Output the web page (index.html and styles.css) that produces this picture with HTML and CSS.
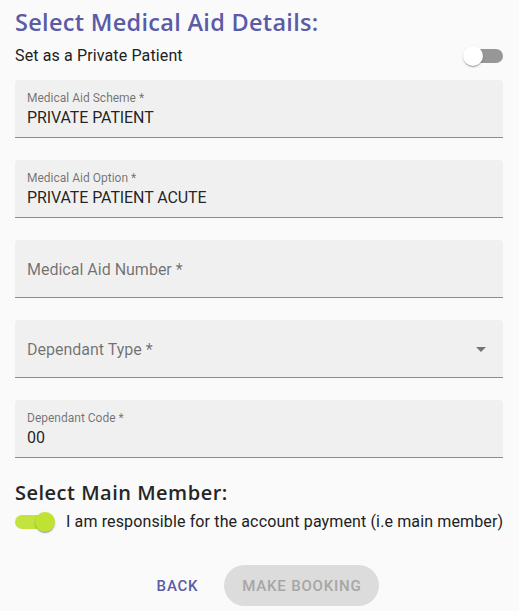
FILE: index.html
```html
<!DOCTYPE html>
<html>
<head>
<meta charset="utf-8">
<link rel="stylesheet" href="styles.css">
</head>
<body>
<div class="page">
  <h1 class="title">Select Medical Aid Details:</h1>
  <div class="row-between">
    <span class="body-text">Set as a Private Patient</span>
    <span class="switch switch-off"><span class="track"></span><span class="thumb"></span></span>
  </div>

  <div class="fields">
    <div class="field filled">
      <span class="label-small">Medical Aid Scheme *</span>
      <span class="value">PRIVATE PATIENT</span>
    </div>
    <div class="field filled">
      <span class="label-small">Medical Aid Option *</span>
      <span class="value">PRIVATE PATIENT ACUTE</span>
    </div>
    <div class="field empty">
      <span class="label-big">Medical Aid Number *</span>
    </div>
    <div class="field empty">
      <span class="label-big">Dependant Type *</span>
      <svg class="arrow" width="24" height="24" viewBox="0 0 24 24"><path d="M7 10l5 5 5-5z" fill="#757575"/></svg>
    </div>
    <div class="field filled">
      <span class="label-small">Dependant Code *</span>
      <span class="value">00</span>
    </div>
  </div>

  <h2 class="subtitle">Select Main Member:</h2>
  <div class="row-check">
    <span class="switch switch-on"><span class="track"></span><span class="thumb"></span></span>
    <span class="body-text nowrap">I am responsible for the account payment (i.e main member)</span>
  </div>

  <div class="actions">
    <button class="btn-text">BACK</button>
    <button class="btn-pill">MAKE BOOKING</button>
  </div>
</div>
</body>
</html>
```

FILE: styles.css
```css
html, body {
  margin: 0;
  padding: 0;
  background: #fafafa;
}
body {
  font-family: Roboto, "Liberation Sans", sans-serif;
  color: rgba(0,0,0,0.87);
}
.page {
  padding: 6px 16px 0 15px;
}
.title {
  margin: 0;
  font-family: "Open Sans", "DejaVu Sans", sans-serif;
  font-weight: 600;
  font-size: 23.5px;
  line-height: 32px;
  color: #5b5ba7;
  letter-spacing: 0.3px;
}
.row-between {
  height: 36px;
  display: flex;
  align-items: center;
  justify-content: space-between;
}
.body-text {
  font-size: 16px;
  line-height: 20px;
  color: #212121;
  letter-spacing: 0.13px;
}
.nowrap {
  white-space: nowrap;
}
.switch {
  position: relative;
  display: inline-block;
  flex: none;
}
.switch-off {
  width: 40px;
  height: 20px;
}
.switch-off .track {
  position: absolute;
  left: 6px;
  top: 3px;
  width: 34px;
  height: 14px;
  border-radius: 7px;
  background: #979797;
}
.switch-off .thumb {
  position: absolute;
  left: 0;
  top: 0;
  width: 20px;
  height: 20px;
  border-radius: 50%;
  background: #fff;
  box-shadow: 0 2px 1px -1px rgba(0,0,0,0.2), 0 1px 1px 0 rgba(0,0,0,0.14), 0 1px 3px 0 rgba(0,0,0,0.12);
}
.switch-on {
  width: 40px;
  height: 20px;
}
.switch-on .track {
  position: absolute;
  left: 0;
  top: 3px;
  width: 34px;
  height: 14px;
  border-radius: 7px;
  background: #c3e33e;
}
.switch-on .thumb {
  position: absolute;
  left: 20px;
  top: 0;
  width: 20px;
  height: 20px;
  border-radius: 50%;
  background: #bfe233;
  box-shadow: 0 2px 1px -1px rgba(0,0,0,0.2), 0 1px 1px 0 rgba(0,0,0,0.14), 0 1px 3px 0 rgba(0,0,0,0.12);
}
.fields {
  margin-top: 6px;
  display: flex;
  flex-direction: column;
  gap: 22px;
}
.field {
  position: relative;
  height: 56px;
  padding-top: 1px;
  background: #f0f0f0;
  border-radius: 4px 4px 0 0;
  border-bottom: 1px solid #8c8c8c;
  box-sizing: content-box;
  padding-left: 12px;
  padding-right: 12px;
  display: flex;
  flex-direction: column;
}
.field.filled {
  padding-top: 11px;
  height: 46px;
}
.label-small {
  font-size: 12px;
  line-height: 14px;
  color: rgba(0,0,0,0.54);
}
.value {
  margin-top: 3px;
  font-size: 16px;
  line-height: 19px;
  color: rgba(0,0,0,0.87);
  letter-spacing: -0.1px;
}
.field.empty {
  justify-content: center;
}
.label-big {
  font-size: 16px;
  line-height: 19px;
  color: rgba(0,0,0,0.54);
}
.arrow {
  position: absolute;
  right: 10px;
  top: 17px;
}
.subtitle {
  margin: 24px 0 0;
  font-family: "Open Sans", "DejaVu Sans", sans-serif;
  font-weight: 600;
  font-size: 20px;
  line-height: 22px;
  color: #262626;
  letter-spacing: 0.5px;
}
.row-check {
  height: 36px;
  display: flex;
  align-items: center;
  gap: 11px;
}
.actions {
  margin-top: 25px;
  padding-right: 4px;
  display: flex;
  justify-content: center;
  align-items: center;
  gap: 4px;
}
button {
  font-family: Roboto, "Liberation Sans", sans-serif;
  font-weight: 500;
  font-size: 15px;
  border: none;
  cursor: pointer;
  letter-spacing: 0.8px;
}
.btn-text {
  background: transparent;
  color: #5b5ba7;
  padding: 0 22px;
  height: 41px;
}
.btn-pill {
  background: #dcdcdc;
  color: #a6a6a6;
  width: 155px;
  height: 41px;
  border-radius: 21px;
  padding: 0;
}
```
